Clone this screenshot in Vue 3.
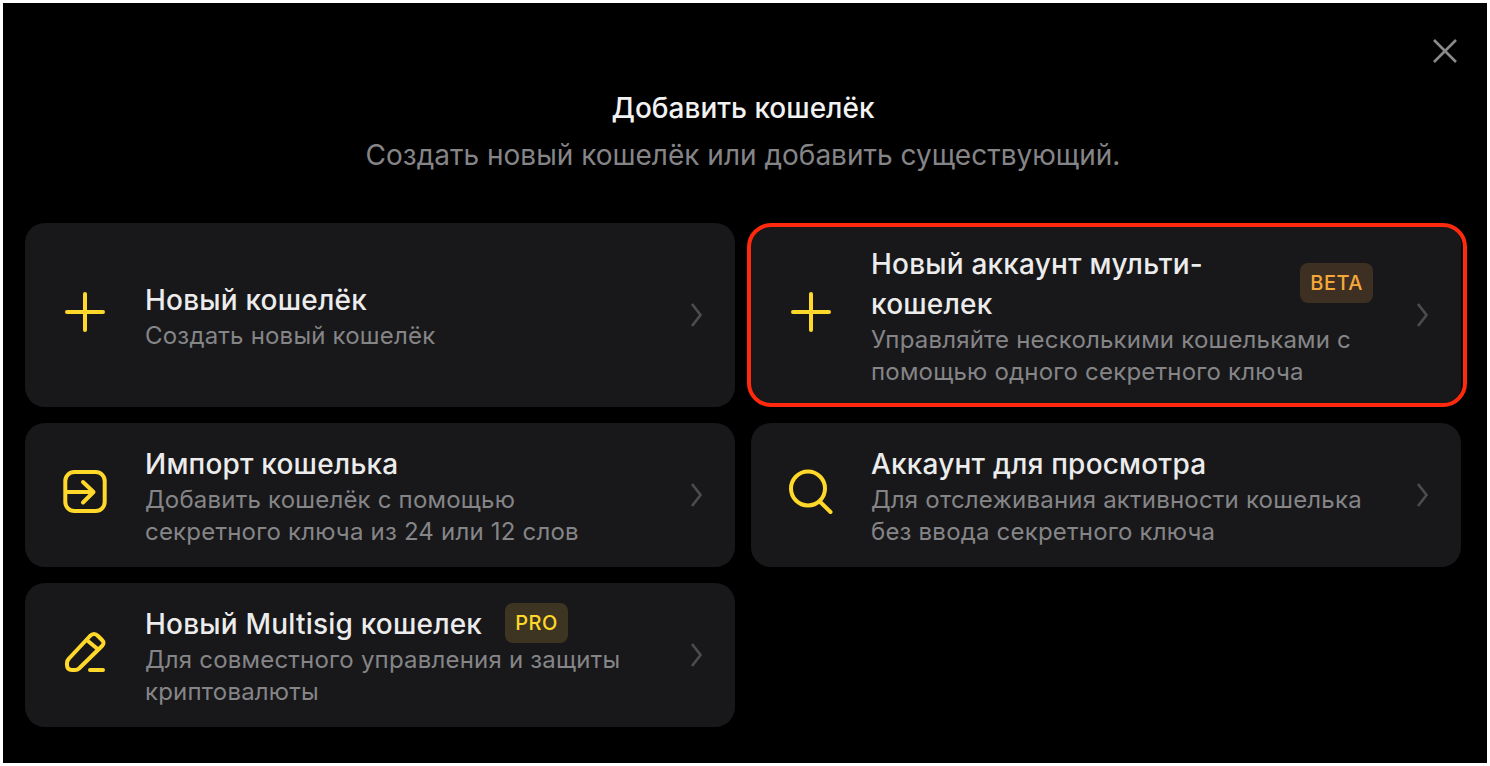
<script setup>
const items = [
  {
    icon: "plus",
    title: "Новый кошелёк",
    text: "Создать новый кошелёк"
  },
  {
    icon: "plus",
    title: "Новый аккаунт мульти-кошелек",
    text: "Управляйте несколькими кошельками с помощью одного секретного ключа",
    badge: "BETA",
    badgeClass: "badge--beta",
    marked: true
  },
  {
    icon: "import",
    title: "Импорт кошелька",
    text: "Добавить кошелёк с помощью секретного ключа из 24 или 12 слов"
  },
  {
    icon: "search",
    title: "Аккаунт для просмотра",
    text: "Для отслеживания активности кошелька без ввода секретного ключа"
  },
  {
    icon: "pen",
    title: "Новый Multisig кошелек",
    text: "Для совместного управления и защиты криптовалюты",
    badge: "PRO",
    badgeClass: "badge--pro"
  }
];
</script>

<template>
  <div class="panel">
    <button type="button" class="close" aria-label="Закрыть">
      <svg width="24" height="24" viewBox="0 0 24 24" fill="none">
        <path d="M1 1L23 23M23 1L1 23" stroke="#8a8a8a" stroke-width="2.6" />
      </svg>
    </button>

    <header class="head">
      <h1 class="head__title">Добавить кошелёк</h1>
      <p class="head__sub">Создать новый кошелёк или добавить существующий.</p>
    </header>

    <div class="grid">
      <div v-for="item in items" :key="item.title" class="card" :class="{ 'card--marked': item.marked }">
        <svg class="card__icon" width="56" height="56" viewBox="0 0 56 56" fill="none" stroke="#ffd829" stroke-width="4" stroke-linecap="round" stroke-linejoin="round">
          <path v-if="item.icon === 'plus'" d="M10 25H46M28 7V43" />
          <template v-else-if="item.icon === 'import'">
            <rect x="8.3" y="5" width="39.4" height="39" rx="9" />
            <path d="M10 25H36M26 15L36.5 25L26 35.5" />
          </template>
          <template v-else-if="item.icon === 'search'">
            <circle cx="25" cy="21.5" r="17" />
            <path d="M37 34.7L47.5 45" />
          </template>
          <template v-else>
            <path d="M15 43Q10 43 10 38V36Q10 33.5 12 31.5L33 9Q37 5 41 9L45 13Q48 16 45 19L22 41.5Q20.5 43 18 43Z" />
            <path d="M29.7 13L39.7 21.3M33 43H46" />
          </template>
        </svg>

        <div class="card__copy">
          <div class="card__head">
            <strong class="card__title">{{ item.title }}</strong>
            <span v-if="item.badge" class="badge" :class="item.badgeClass">{{ item.badge }}</span>
          </div>
          <p class="card__text">{{ item.text }}</p>
        </div>

        <svg class="card__chevron" width="12" height="24" viewBox="0 0 12 24" fill="none">
          <path d="M2 1L10.5 12L2 23" stroke="#4c4c4e" stroke-width="2.6" />
        </svg>
      </div>
    </div>
  </div>
</template>

<style>
html,
body {
  margin: 0;
  background: #fff;
}
</style>

<style scoped>
.panel {
  position: relative;
  box-sizing: border-box;
  height: 760px;
  margin: 3px;
  padding: 85px 26px 0 22px;
  background: #000;
  font-family: Inter, "Noto Sans", sans-serif;
}

.close {
  position: absolute;
  top: 36px;
  right: 30px;
  display: block;
  padding: 0;
  border: 0;
  background: none;
}

.close svg {
  display: block;
}

.head {
  text-align: center;
  margin-bottom: 48px;
}

.head__title {
  margin: 0 0 7px;
  color: #f2f2f2;
  font-size: 28px;
  font-weight: 500;
  line-height: 40px;
}

.head__sub {
  margin: 0;
  color: #858588;
  font-size: 28px;
  line-height: 40px;
}

.grid {
  display: grid;
  grid-template-columns: repeat(2, 1fr);
  gap: 16px;
}

.card {
  position: relative;
  display: flex;
  align-items: center;
  padding: 20px 33px 20px 32px;
  border-radius: 20px;
  background: #18181a;
}

.card--marked::after {
  content: "";
  position: absolute;
  inset: 0 -6px 0 -4px;
  border: 4px solid #ff2a0d;
  border-radius: 24px;
  pointer-events: none;
}

.card__icon {
  flex: none;
  display: block;
  margin-right: 32px;
}

.card__copy {
  flex: 1;
  min-width: 0;
  margin: 1px 0 -1px;
}

.card__head {
  display: flex;
  align-items: center;
}

.card__title {
  color: #ececec;
  font-size: 28px;
  font-weight: 500;
  letter-spacing: 0.2px;
  line-height: 40px;
}

.card__text {
  margin: 0;
  color: #858588;
  font-size: 24px;
  letter-spacing: 0.2px;
  line-height: 32px;
}

.badge {
  flex: none;
  margin-left: 23px;
  margin-top: -2px;
  padding: 0 10px;
  border-radius: 8px;
  font-size: 20px;
  font-weight: 500;
  letter-spacing: 0.5px;
  line-height: 40px;
}

.card--marked .badge {
  margin-left: auto;
}

.badge--beta {
  background: #3d2f22;
  color: #f5a83a;
}

.badge--pro {
  background: #3d3522;
  color: #ffd829;
}

.card__chevron {
  flex: none;
  display: block;
  margin-left: 43px;
}
</style>
